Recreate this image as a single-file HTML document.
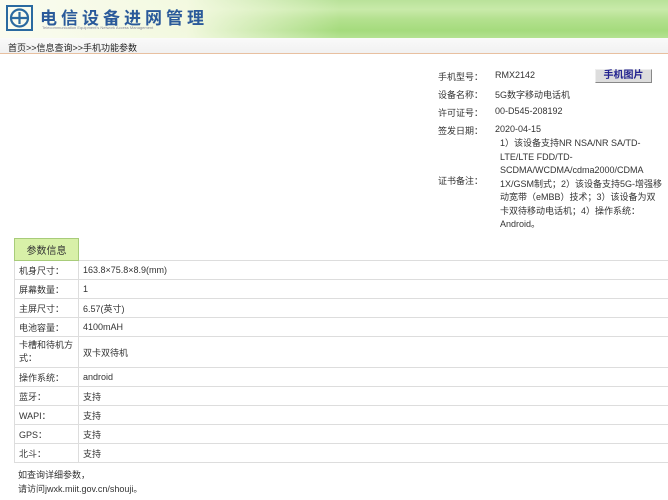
<!DOCTYPE html>
<html><head><meta charset="utf-8"><style>
*{margin:0;padding:0;box-sizing:border-box}
body{width:668px;height:500px;overflow:hidden;background:#fff;font-family:"Liberation Sans","Noto Sans CJK SC",sans-serif;font-size:9px;color:#333}
.hdr{position:absolute;left:0;top:0;width:668px;height:38px;background:linear-gradient(to bottom,#b9e29a 0,#c8eaa9 25%,#b4e18f 50%,#a5db7d 80%,#b4e292 100%)}
.hdrl{position:absolute;left:0;top:0;width:340px;height:38px;background:linear-gradient(to right,rgba(250,252,240,1) 0,rgba(246,250,228,0.95) 55%,rgba(240,248,220,0) 100%)}
.logo{position:absolute;left:6px;top:5px}
.title{position:absolute;left:40px;top:4px;font-size:17px;font-weight:bold;color:#2a5a9a;letter-spacing:4px;font-family:"Noto Sans CJK SC",sans-serif}
.sub{position:absolute;left:42px;top:25px;font-size:4px;color:#889}
.bc{position:absolute;left:0;top:38px;width:668px;height:16px;background:linear-gradient(#fafafa,#f1f1f1);border-bottom:1px solid #e8c0a0;font-size:9px;padding:3px 0 0 8px;color:#222}
.info{position:absolute;left:430px;top:70px;width:238px}
.r{position:absolute;left:0;white-space:nowrap}
.l{position:absolute;left:8px}
.v{position:absolute;left:65px}
.btn{position:absolute;left:595px;top:69px;width:57px;height:14px;background:#ddd;border:1px solid #888;border-left-color:#eee;border-top-color:#eee;color:#23238f;font-weight:bold;font-size:10px;text-align:center;line-height:12px}
.note{position:absolute;left:500px;top:137px;width:168px;line-height:13.5px;font-size:9px}
table{position:absolute;left:14px;top:238px;border-collapse:collapse;width:700px}
td{border:1px solid #ddd;padding:0 4px;font-size:9px;height:19px}
td.k{width:64px}
.tab{background:#d8f0a8;border:1px solid #a8cc7a;text-align:center;height:22px;font-size:10px}
.foot{position:absolute;left:18px;top:468px;line-height:14px;font-size:9px}
</style></head><body>
<div class="hdr"></div><div class="hdrl"></div>
<svg class="logo" width="27" height="26" viewBox="0 0 27 26"><rect x="1" y="1" width="25" height="24" fill="none" stroke="#2a6aa0" stroke-width="2"/><circle cx="13.5" cy="13" r="8.5" fill="none" stroke="#2a6aa0" stroke-width="2.2"/><path d="M5 13H22M13.5 7v12" stroke="#2a6aa0" stroke-width="2.2" fill="none"/></svg>
<div class="title">电信设备进网管理</div>
<div class="sub">Telecommunication Equipment's Network Access Management</div>
<div class="bc">首页&gt;&gt;信息查询&gt;&gt;手机功能参数</div>
<div class="info">
<div class="r" style="top:0"><span class="l">手机型号：</span><span class="v">RMX2142</span></div>
<div class="r" style="top:18px"><span class="l">设备名称：</span><span class="v">5G数字移动电话机</span></div>
<div class="r" style="top:36px"><span class="l">许可证号：</span><span class="v">00-D545-208192</span></div>
<div class="r" style="top:54px"><span class="l">签发日期：</span><span class="v">2020-04-15</span></div>
<div class="r" style="top:104px"><span class="l">证书备注：</span></div>
</div>
<div class="btn">手机图片</div>
<div class="note">1）该设备支持NR NSA/NR SA/TD-<br>LTE/LTE FDD/TD-<br>SCDMA/WCDMA/cdma2000/CDMA<br>1X/GSM制式；2）该设备支持5G-增强移<br>动宽带（eMBB）技术；3）该设备为双<br>卡双待移动电话机；4）操作系统：<br>Android。</div>
<table>
<tr><td class="tab">参数信息</td><td style="border:none;border-bottom:1px solid #ddd"></td></tr>
<tr><td class="k">机身尺寸：</td><td>163.8×75.8×8.9(mm)</td></tr>
<tr><td class="k">屏幕数量：</td><td>1</td></tr>
<tr><td class="k">主屏尺寸：</td><td>6.57(英寸)</td></tr>
<tr><td class="k">电池容量：</td><td>4100mAH</td></tr>
<tr><td class="k" style="height:31px;line-height:13px">卡槽和待机方式：</td><td>双卡双待机</td></tr>
<tr><td class="k">操作系统：</td><td>android</td></tr>
<tr><td class="k">蓝牙：</td><td>支持</td></tr>
<tr><td class="k">WAPI：</td><td>支持</td></tr>
<tr><td class="k">GPS：</td><td>支持</td></tr>
<tr><td class="k">北斗：</td><td>支持</td></tr>
</table>
<div class="foot">如查询详细参数，<br>请访问jwxk.miit.gov.cn/shouji。</div>
</body></html>
